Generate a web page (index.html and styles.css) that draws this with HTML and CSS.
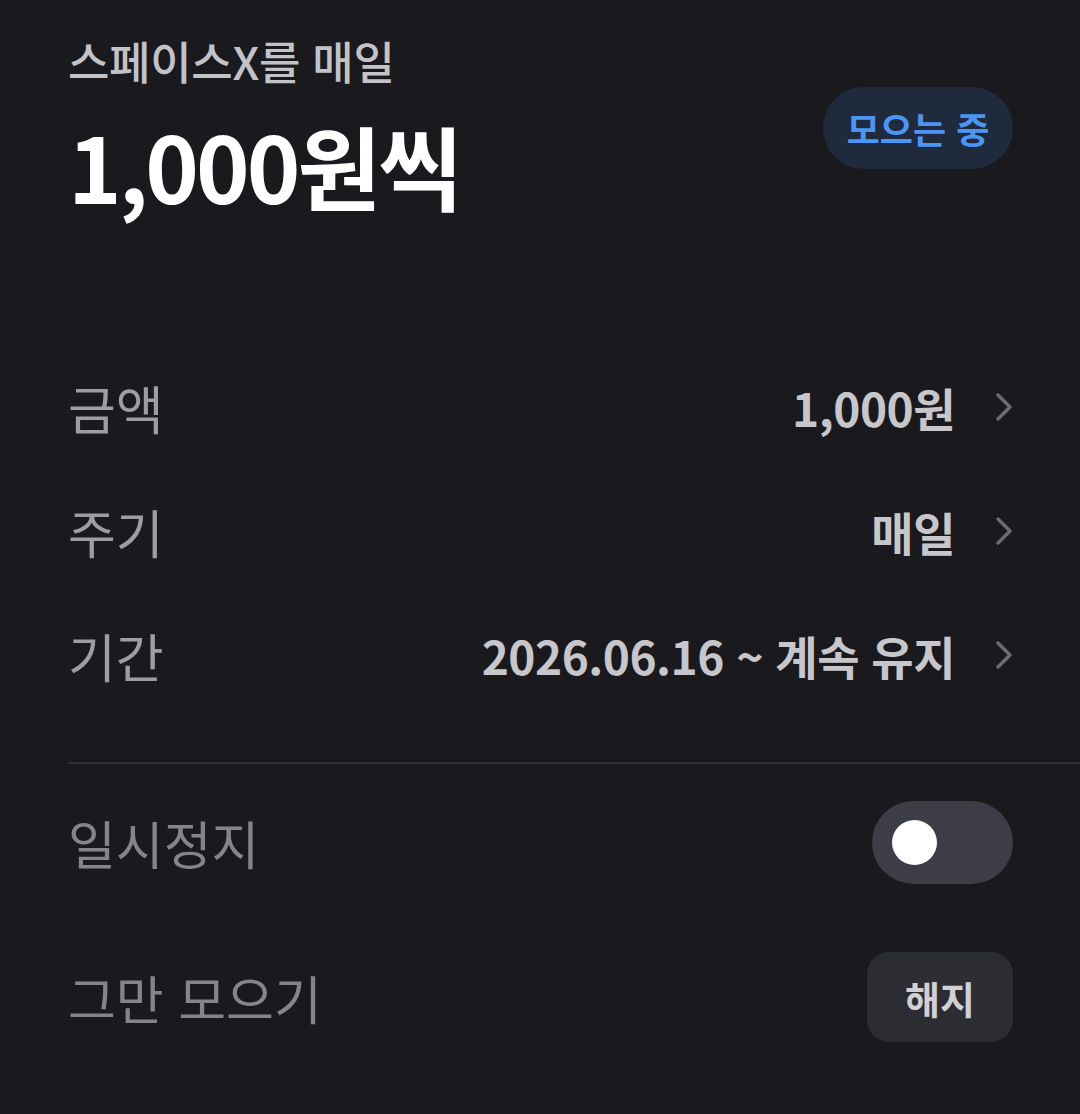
FILE: index.html
```html
<!DOCTYPE html>
<html lang="ko">
<head>
    <meta charset="UTF-8">
    <meta name="viewport" content="width=device-width, initial-scale=1.0">
    <title>모으기 설정</title>
    <link rel="stylesheet" href="styles.css">
</head>
<body>
    <div class="page">
        <div class="header">
            <div class="header-text">
                <p class="subtitle">스페이스X를 매일</p>
                <h1 class="amount">1,000원씩</h1>
            </div>
            <span class="badge">모으는 중</span>
        </div>

        <div class="detail-list">
            <div class="detail-row">
                <span class="label">금액</span>
                <span class="value">1,000원
                    <svg class="chevron" width="18" height="30" viewBox="0 0 18 30"><polyline points="3,3 15,15 3,27" /></svg>
                </span>
            </div>
            <div class="detail-row">
                <span class="label">주기</span>
                <span class="value">매일
                    <svg class="chevron" width="18" height="30" viewBox="0 0 18 30"><polyline points="3,3 15,15 3,27" /></svg>
                </span>
            </div>
            <div class="detail-row">
                <span class="label">기간</span>
                <span class="value">2026.06.16 ~ 계속 유지
                    <svg class="chevron" width="18" height="30" viewBox="0 0 18 30"><polyline points="3,3 15,15 3,27" /></svg>
                </span>
            </div>
        </div>

        <div class="divider"></div>

        <div class="setting-row pause-row">
            <span class="label muted">일시정지</span>
            <div class="toggle"><div class="knob"></div></div>
        </div>
        <div class="setting-row stop-row">
            <span class="label muted">그만 모으기</span>
            <button class="cancel-button">해지</button>
        </div>
    </div>
</body>
</html>
```

FILE: styles.css
```css
body {
    margin: 0;
    background-color: #19191e;
    font-family: "Noto Sans CJK KR", "Noto Sans", sans-serif;
}

.page {
    padding: 36px 67px 0 68px;
}

.header {
    display: flex;
    justify-content: space-between;
    align-items: flex-start;
}

.subtitle {
    margin: 0;
    font-size: 45px;
    line-height: 50px;
    font-weight: 500;
    color: #c2c2c7;
    letter-spacing: -0.3px;
}

.amount {
    margin: 23px 0 0 0;
    font-size: 91px;
    line-height: 110px;
    font-weight: 700;
    color: #ffffff;
    letter-spacing: -3px;
}

.badge {
    margin-top: 51px;
    width: 190px;
    height: 82px;
    border-radius: 41px;
    background-color: #1f2b3d;
    color: #4b95f5;
    font-size: 36px;
    font-weight: 700;
    display: flex;
    align-items: center;
    justify-content: center;
}

.detail-list {
    margin-top: 126px;
}

.detail-row {
    height: 124px;
    display: flex;
    justify-content: space-between;
    align-items: center;
}

.label {
    font-size: 52px;
    color: #9d9da3;
}

.label.muted {
    color: #84848a;
}

.value {
    display: flex;
    align-items: center;
    gap: 40px;
    font-size: 46px;
    font-weight: 700;
    color: #c6c6cb;
    letter-spacing: -0.5px;
}

.chevron polyline {
    fill: none;
    stroke: #6b6b75;
    stroke-width: 3.5;
    stroke-linecap: round;
    stroke-linejoin: round;
}

.divider {
    margin: 45px -67px 0 0;
    height: 2px;
    background-color: #2f2f35;
}

.setting-row {
    display: flex;
    justify-content: space-between;
    align-items: center;
}

.pause-row {
    margin-top: 16px;
    height: 124px;
}

.stop-row {
    height: 186px;
}

.toggle {
    width: 141px;
    height: 83px;
    border-radius: 42px;
    background-color: #3d3d47;
    display: flex;
    align-items: center;
    padding-left: 20px;
    box-sizing: border-box;
}

.knob {
    width: 45px;
    height: 45px;
    border-radius: 50%;
    background-color: #ffffff;
}

.cancel-button {
    width: 146px;
    height: 90px;
    border: none;
    border-radius: 22px;
    background-color: #2c2c33;
    color: #d0d0d5;
    font-family: inherit;
    font-size: 38px;
    font-weight: 700;
}
```
